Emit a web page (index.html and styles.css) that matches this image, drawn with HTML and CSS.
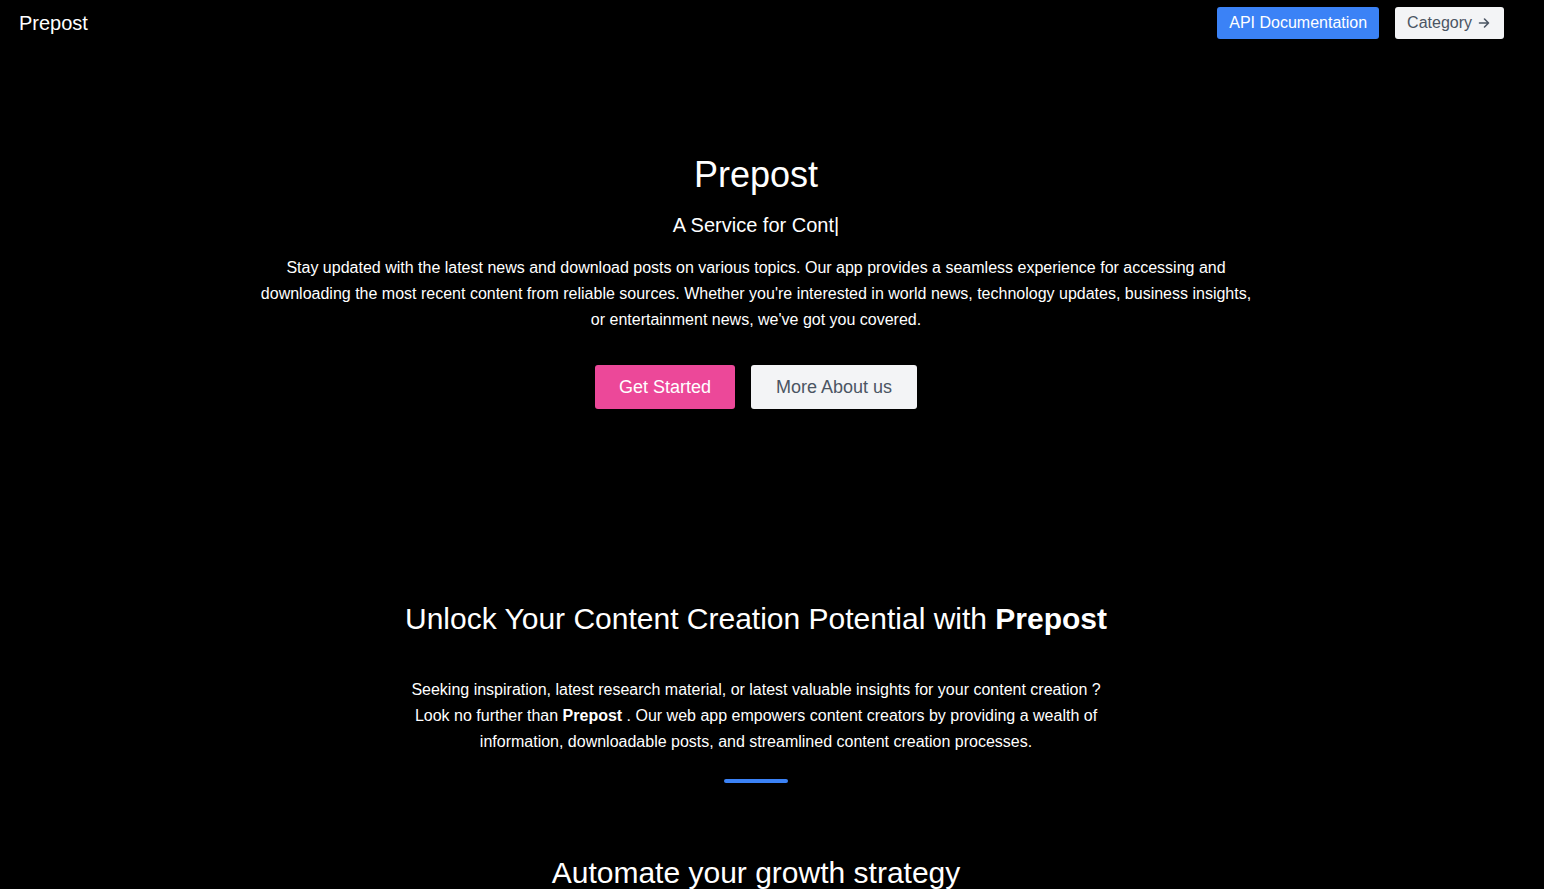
FILE: index.html
```html
<!DOCTYPE html>
<html lang="en">
<head>
<meta charset="utf-8">
<title>Prepost</title>
<link rel="stylesheet" href="styles.css">
</head>
<body>
<header class="topbar">
  <div class="logo">Prepost</div>
  <nav class="nav">
    <a class="btn-api" href="#">API Documentation</a>
    <a class="btn-cat" href="#">Category<svg class="arrow" width="12" height="12" viewBox="0 0 12 12" fill="none" stroke="#4b5563" stroke-width="1.6" stroke-linecap="round" stroke-linejoin="round"><path d="M1.5 6h9M6.5 2l4 4-4 4"/></svg></a>
  </nav>
</header>
<main class="content">
<section class="hero">
  <h1 class="hero-title">Prepost</h1>
  <p class="hero-sub">A Service for Cont<span class="cursor">|</span></p>
  <p class="hero-text">Stay updated with the latest news and download posts on various topics. Our app provides a seamless experience for accessing and downloading the most recent content from reliable sources. Whether you're interested in world news, technology updates, business insights, or entertainment news, we've got you covered.</p>
  <div class="hero-actions">
    <a class="btn-primary" href="#">Get Started</a>
    <a class="btn-secondary" href="#">More About us</a>
  </div>
</section>
<section class="unlock">
  <h2 class="unlock-title">Unlock Your Content Creation Potential with <strong>Prepost</strong></h2>
  <p class="unlock-text">Seeking inspiration, latest research material, or latest valuable insights for your content creation ? Look no further than <strong>Prepost</strong> . Our web app empowers content creators by providing a wealth of information, downloadable posts, and streamlined content creation processes.</p>
  <div class="divider"></div>
</section>
<section class="automate">
  <h2 class="automate-title">Automate your growth strategy</h2>
</section>
</main>
</body>
</html>
```
FILE: styles.css
```css
html, body {
  margin: 0;
  padding: 0;
  background: #000;
  color: #fff;
  font-family: "Liberation Sans", Arial, sans-serif;
  overflow: hidden;
}

a { text-decoration: none; }

.topbar {
  display: flex;
  justify-content: space-between;
  align-items: center;
  padding: 7px 40px 0 19px;
}

.logo {
  font-size: 20px;
  line-height: 32px;
  color: #fff;
}

.nav {
  display: flex;
  gap: 16px;
}

.btn-api, .btn-cat {
  display: flex;
  align-items: center;
  font-size: 16px;
  line-height: 20px;
  padding: 6px 12px;
  border-radius: 3px;
}

.btn-api {
  background: #3b82f6;
  color: #fff;
}

.btn-cat {
  background: #f3f4f6;
  color: #4b5563;
  padding-right: 14px;
}

.arrow {
  display: block;
  margin-left: 6px;
}

.content {
  padding-right: 32px;
}

.hero {
  display: flex;
  flex-direction: column;
  align-items: center;
  text-align: center;
  padding-top: 116px;
}

.hero-title {
  margin: 0;
  font-size: 36px;
  line-height: 40px;
  font-weight: 400;
}

.hero-sub {
  margin: 16px 0 0;
  font-size: 20px;
  line-height: 28px;
}

.hero-text {
  margin: 16px 0 0;
  max-width: 1000px;
  font-size: 16px;
  line-height: 26px;
}

.hero-actions {
  display: flex;
  gap: 16px;
  margin-top: 32px;
}

.btn-primary, .btn-secondary {
  display: block;
  font-size: 18px;
  line-height: 28px;
  padding: 8px 24px;
  border-radius: 3px;
}

.btn-primary {
  background: #ec4899;
  color: #fff;
}

.btn-secondary {
  background: #f3f4f6;
  color: #4b5563;
  padding: 8px 25px;
}

.unlock {
  display: flex;
  flex-direction: column;
  align-items: center;
  text-align: center;
  margin-top: 192px;
}

.unlock-title {
  margin: 0;
  font-size: 30px;
  line-height: 36px;
  font-weight: 400;
}

.unlock-title strong { font-weight: 700; }

.unlock-text {
  margin: 40px 0 0;
  max-width: 700px;
  font-size: 16px;
  line-height: 26px;
}

.divider {
  margin-top: 24px;
  width: 64px;
  height: 4px;
  border-radius: 2px;
  background: #3b82f6;
}

.automate {
  display: flex;
  justify-content: center;
  margin-top: 72px;
}

.automate-title {
  margin: 0;
  font-size: 30px;
  line-height: 36px;
  font-weight: 400;
}
```
